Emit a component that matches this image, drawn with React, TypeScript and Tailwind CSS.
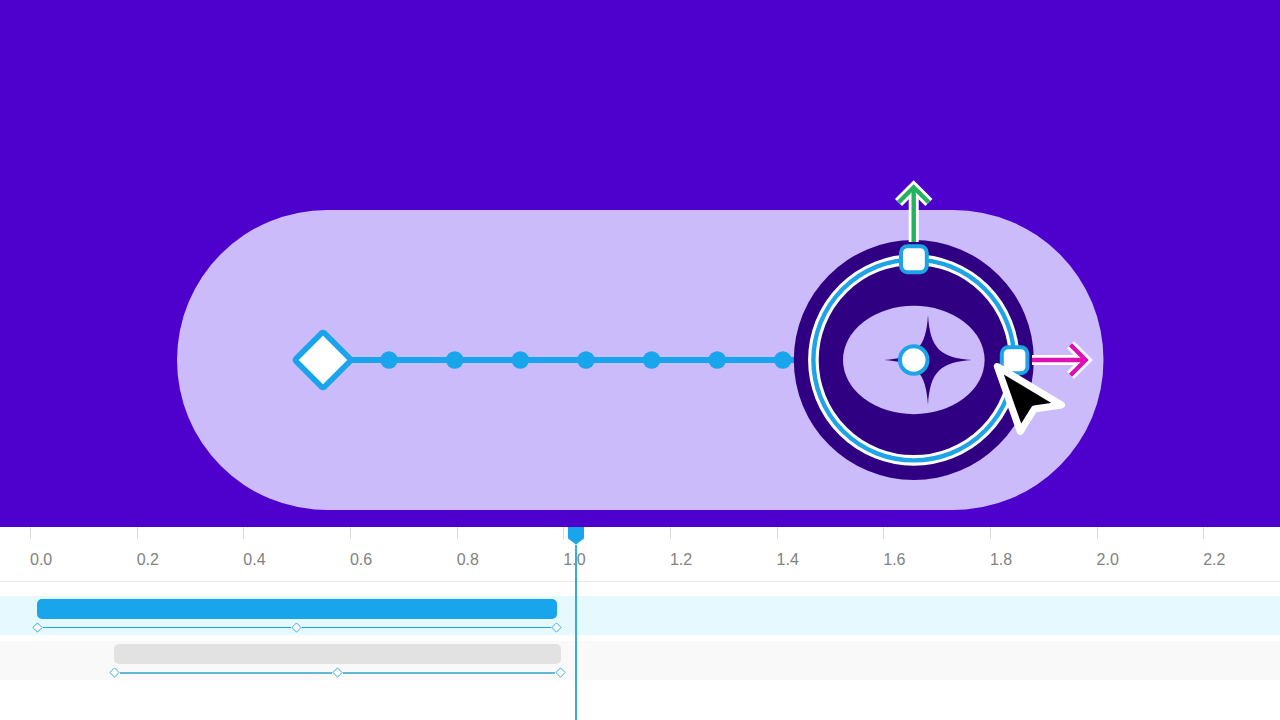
import React from 'react';

// one second covers 5 ruler columns, each 1/12 of the width
const SECOND = 500 / 12;

const marks = ['0.0', '0.2', '0.4', '0.6', '0.8', '1.0', '1.2', '1.4', '1.6', '1.8', '2.0', '2.2'];
const dots = [389, 454.7, 520.3, 586, 651.6, 717.2, 782.8];

function Stage() {
  return (
    <section className="bg-[#4e00cd]">
      <svg viewBox="0 0 1280 527" className="block w-full h-auto" role="img" aria-label="Toggle animation path">
        <rect x="177" y="210" width="926.5" height="300" rx="150" fill="#ccbbfb" />

        {/* motion path */}
        <path d="M345 360H800" stroke="#18a5ec" strokeWidth="6" />
        {dots.map((x) => (
          <circle key={x} cx={x} cy="360" r="8.8" fill="#18a5ec" />
        ))}
        <rect
          x="303"
          y="340"
          width="40"
          height="40"
          rx="1.8"
          transform="rotate(45 323 360)"
          fill="#fff"
          stroke="#18a5ec"
          strokeWidth="5.6"
        />

        {/* knob */}
        <circle cx="913.8" cy="360" r="120" fill="#300082" />
        <ellipse cx="913.8" cy="360" rx="70.8" ry="54.2" fill="#ccbbfb" />
        <path
          d="M928 315C930 348 940 358 972 360C940 362 930 372 928 405C926 372 916 362 884 360C916 358 926 348 928 315Z"
          fill="#300082"
        />
        <circle cx="913.8" cy="360" r="100.4" fill="none" stroke="#fff" strokeWidth="10.6" />
        <circle cx="913.8" cy="360" r="100.4" fill="none" stroke="#1ea4e6" strokeWidth="4.4" />

        {/* axis arrows */}
        <g fill="none" stroke="#fff" strokeWidth="10">
          <path d="M913.7 242V188" />
          <path d="M898.5 202.5L913.7 187.3L928.9 202.5" />
          <path d="M1032 360H1085" />
          <path d="M1070.5 344.8L1085.7 360L1070.5 375.2" />
        </g>
        <g fill="none" stroke="#23b35f" strokeWidth="4.4">
          <path d="M913.7 242V187" />
          <path d="M898.5 202.5L913.7 187.3L928.9 202.5" />
        </g>
        <g fill="none" stroke="#e00fb2" strokeWidth="4.4">
          <path d="M1032 360H1086" />
          <path d="M1070.5 344.8L1085.7 360L1070.5 375.2" />
        </g>

        {/* handles */}
        <g fill="#fff" stroke="#1ea4e6" strokeWidth="4">
          <rect x="901" y="246.2" width="25.8" height="26" rx="6.5" />
          <rect x="1001.8" y="347.2" width="25.6" height="26" rx="6.5" />
          <circle cx="913.7" cy="360" r="13.8" />
        </g>

        {/* cursor */}
        <path
          d="M997.3 366.4L1061.5 405L1034.3 409L1020.3 431.5Z"
          fill="#000"
          stroke="#fff"
          strokeWidth="7"
          strokeLinejoin="round"
        />
      </svg>
    </section>
  );
}

function Ruler() {
  return (
    <div className="flex h-[55px] overflow-hidden border-b border-[#e9e9e9]">
      <div className="w-[30px] shrink-0" />
      {marks.map((mark) => (
        <div key={mark} className="w-1/12 shrink-0">
          <div className="h-3 w-px bg-[#d9d9d9]" />
          <div className="pt-[9px] text-base leading-6 text-[#828282]">{mark}</div>
        </div>
      ))}
    </div>
  );
}

function Keyframe({ label }: { label: string }) {
  return (
    <button type="button" aria-label={label} className="block shrink-0">
      <svg viewBox="0 0 11 11" className="block w-[11px] h-[11px]">
        <path d="M5.5 0.9L10.1 5.5L5.5 10.1L0.9 5.5Z" fill="#fff" stroke="#38abdc" />
      </svg>
    </button>
  );
}

type TrackProps = {
  name: string;
  start: number;
  end: number;
  rowClass: string;
  barClass: string;
  lineClass: string;
};

function Track({ name, start, end, rowClass, barClass, lineClass }: TrackProps) {
  return (
    <div className={`flex h-[39px] pt-[3px] ${rowClass}`}>
      <div className="w-[30px] shrink-0" />
      <div className="shrink-0" style={{ width: `${start * SECOND}%` }} />
      <div className="shrink-0" style={{ width: `${(end - start) * SECOND}%` }}>
        <div className={`h-5 rounded-[5px] ${barClass}`} />
        <div className="-mx-[5px] mt-[3px] flex items-center">
          <Keyframe label={`${name} first keyframe`} />
          <div className={`flex-1 ${lineClass}`} />
          <Keyframe label={`${name} middle keyframe`} />
          <div className={`flex-1 ${lineClass}`} />
          <Keyframe label={`${name} last keyframe`} />
        </div>
      </div>
    </div>
  );
}

function Playhead({ time }: { time: number }) {
  return (
    <div className="absolute inset-0 flex pointer-events-none">
      <div className="w-[30px] shrink-0" />
      <div className="shrink-0" style={{ width: `${time * SECOND}%` }} />
      <div className="-ml-2 flex w-4 shrink-0 flex-col items-center">
        <button type="button" aria-label="Playhead" className="pointer-events-auto block">
          <svg viewBox="0 0 16 18" className="block w-4 h-[18px]">
            <path d="M0 0H16V11.5L8 17.5L0 11.5Z" fill="#18a5ec" />
          </svg>
        </button>
        <div className="w-0.5 flex-1 bg-[#35aed6]" />
      </div>
    </div>
  );
}

function App() {
  return (
    <main className="flex min-h-screen flex-col bg-white font-['Liberation_Sans',Arial,sans-serif]">
      <Stage />
      <section className="relative flex-1 overflow-hidden bg-white">
        <Ruler />
        <div className="flex flex-col gap-1.5 pt-3.5">
          <Track
            name="Knob"
            start={0.0125}
            end={0.9875}
            rowClass="bg-[#e6f9fe]"
            barClass="bg-[#18a5ec]"
            lineClass="h-px bg-[#18a5ec]"
          />
          <Track
            name="Background"
            start={0.1575}
            end={0.995}
            rowClass="bg-[#f9f9f9]"
            barClass="bg-[#e2e2e2]"
            lineClass="h-0.5 bg-[#62b7d2]"
          />
        </div>
        <Playhead time={1.0237} />
      </section>
    </main>
  );
}

export default App;
